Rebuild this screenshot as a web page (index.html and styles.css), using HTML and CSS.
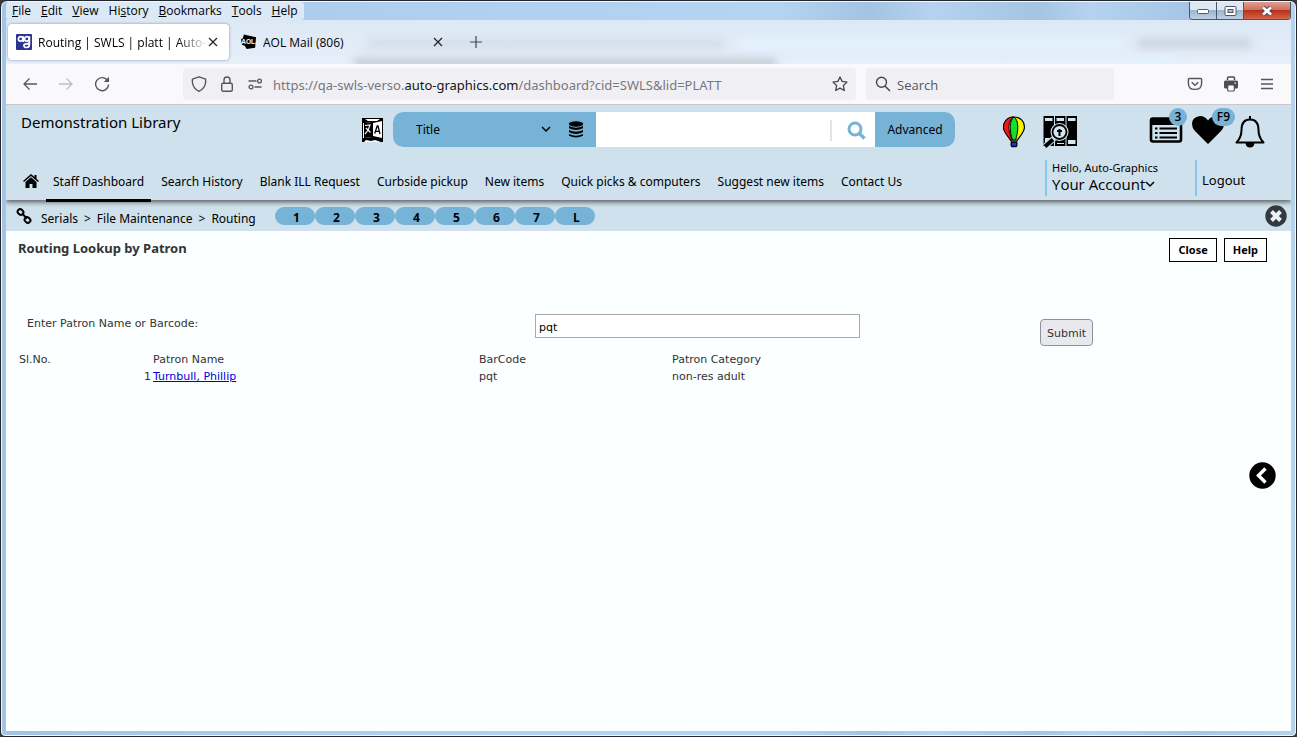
FILE: index.html
```html
<!DOCTYPE html>
<html lang="en">
<head>
<meta charset="utf-8">
<title>Routing | SWLS | platt | Auto-Graphics</title>
<link rel="stylesheet" href="styles.css">
</head>
<body>
<div class="window">
  <header class="chrome">
    <div class="titlebar">
      <nav class="menubar" aria-label="Menu bar">
        <button><u>F</u>ile</button><button><u>E</u>dit</button><button><u>V</u>iew</button><button>Hi<u>s</u>tory</button><button><u>B</u>ookmarks</button><button><u>T</u>ools</button><button><u>H</u>elp</button>
      </nav>
      <div class="window-buttons">
        <button class="win" aria-label="Minimize"><svg width="14" height="8" viewBox="0 0 14 8"><rect x="1.500" y="2.500" width="11" height="4" rx="1" fill="#fff" stroke="#50566a"/></svg></button>
        <button class="win" aria-label="Restore"><svg width="13" height="12" viewBox="0 0 13 12"><rect x="1" y="1.500" width="11" height="9" rx="1" fill="#fff" stroke="#50566a"/><rect x="4" y="4.500" width="5" height="3" fill="#a9c3dd" stroke="#50566a"/></svg></button>
        <button class="win win-close" aria-label="Close window"><svg width="14" height="12" viewBox="0 0 14 12"><path d="M3 2.500 11 9.500M11 2.500 3 9.500" stroke="#50445a" stroke-width="4.600"/><path d="M3 2.500 11 9.500M11 2.500 3 9.500" stroke="#fff" stroke-width="2.800"/></svg></button>
      </div>
    </div>
    <div class="tabstrip">
      <div class="haze haze-a"></div><div class="haze haze-b"></div><div class="haze haze-c"></div><div class="haze haze-d"></div><div class="haze haze-e"></div>
      <div class="tab tab-active">
        <svg width="16" height="16" viewBox="0 0 16 16"><rect width="16" height="16" rx="1" fill="#2b3390"/><g fill="none" stroke="#fff" stroke-width="1.700"><circle cx="4.600" cy="4.900" r="2.200"/><path d="M7.200 2.200v4.300q0 1 1 1"/><circle cx="10.800" cy="4.900" r="2.200"/><path d="M13.400 2.200v8.300q0 3-2.900 3-2.400 0-2.600-1.800 0-1.700 2.500-1.800 3 0 3-2"/></g></svg>
        <span class="tab-title tab-fade">Routing | SWLS | platt | Auto-Gr</span>
        <button class="icon-button" aria-label="Close tab"><svg width="10" height="10" viewBox="0 0 10 10"><path d="M1 1l8 8M9 1 1 9" stroke="#222" stroke-width="1.200"/></svg></button>
      </div>
      <div class="tab">
        <svg width="16" height="16" viewBox="0 0 17 16"><path d="M3 0 16 3 15 14 6 15.500 4 12 1 11 0 5 2 4z" fill="#000"/><text x="8.500" y="10.500" text-anchor="middle" class="aol">AOL.</text></svg>
        <span class="tab-title">AOL Mail (806)</span>
        <button class="icon-button" aria-label="Close tab"><svg width="10" height="10" viewBox="0 0 10 10"><path d="M1 1l8 8M9 1 1 9" stroke="#222" stroke-width="1.200"/></svg></button>
      </div>
      <button class="icon-button new-tab" aria-label="New tab"><svg width="12" height="12" viewBox="0 0 12 12"><path d="M6 0v12M0 6h12" stroke="#444450" stroke-width="1.200"/></svg></button>
    </div>
    <div class="toolbar">
      <div class="history-buttons">
        <button class="icon-button" aria-label="Back"><svg width="16" height="16" viewBox="0 0 16 16"><path d="M15 8H2M7.500 2.500 2 8l5.500 5.500" fill="none" stroke="#55555f" stroke-width="1.300"/></svg></button>
        <button class="icon-button" aria-label="Forward"><svg width="16" height="16" viewBox="0 0 16 16"><path d="M1 8h13M8.500 2.500 14 8l-5.500 5.500" fill="none" stroke="#bfbfc5" stroke-width="1.300"/></svg></button>
        <button class="icon-button" aria-label="Reload"><svg width="16" height="16" viewBox="0 0 16 16"><path d="M13.500 4.500A6.500 6.500 0 1 0 14.600 8.500" fill="none" stroke="#55555f" stroke-width="1.400"/><path d="M15 .8V6H9.800z" fill="#55555f"/></svg></button>
      </div>
      <div class="urlbar">
        <svg width="16" height="16" viewBox="0 0 16 16"><path d="M8 .8 14.600 3.200V6.500Q14 12.500 8 15.300 2 12.500 1.400 6.500V3.200z" fill="none" stroke="#55555f" stroke-width="1.400" stroke-linejoin="round"/></svg>
        <svg width="16" height="16" viewBox="0 0 16 16"><rect x="2.700" y="7.200" width="10.600" height="8" rx="1.500" fill="none" stroke="#55555f" stroke-width="1.400"/><path d="M5 7V4Q5 1 8 1t3 3v3" fill="none" stroke="#55555f" stroke-width="1.400"/></svg>
        <svg width="16" height="12" viewBox="0 0 16 12"><g fill="none" stroke="#55555f" stroke-width="1.300"><circle cx="12.500" cy="3" r="1.900"/><path d="M1.500 3h8M7.500 9h7"/><circle cx="4" cy="9" r="1.900"/></g></svg>
        <a class="url" href="#">https://qa-swls-verso.<b>auto-graphics.com</b>/dashboard?cid=SWLS&amp;lid=PLATT</a>
        <button class="icon-button" aria-label="Bookmark"><svg width="16" height="16" viewBox="0 0 16 16"><path d="M8 1l2.100 4.400 4.900.7-3.600 3.400.9 5L8 12.100 3.700 14.500l.9-5L1 6.100l4.900-.7z" fill="none" stroke="#45454f" stroke-width="1.300" stroke-linejoin="round"/></svg></button>
      </div>
      <label class="quick-search">
        <svg width="16" height="16" viewBox="0 0 16 16"><circle cx="6.500" cy="6.200" r="5" fill="none" stroke="#45454f" stroke-width="1.400"/><path d="m10 10 5 5" stroke="#45454f" stroke-width="1.500"/></svg>
        <input type="text" placeholder="Search" aria-label="Search the web">
      </label>
      <div class="chrome-actions">
        <button class="icon-button" aria-label="Save to Pocket"><svg width="16" height="16" viewBox="0 0 16 16"><path d="M2.300 2.500h11.400q.9 0 .9.900v4q0 6-6.600 6T1.400 7.400v-4q0-.9.900-.9z" fill="none" stroke="#55555f" stroke-width="1.400"/><path d="m4.700 6.300 3.300 3 3.300-3" fill="none" stroke="#55555f" stroke-width="1.400"/></svg></button>
        <button class="icon-button" aria-label="Print"><svg width="16" height="16" viewBox="0 0 16 16"><path d="M4.500 4V2q0-1 1-1h5q1 0 1 1v2" fill="none" stroke="#4c4c57" stroke-width="1.500"/><rect x="1" y="4.500" width="14" height="8" rx="1.500" fill="#4c4c57"/><rect x="4.700" y="9" width="6.600" height="6" rx="1" fill="#fff" stroke="#4c4c57" stroke-width="1.200"/><rect x="11.500" y="6.500" width="1.500" height="1.200" fill="#fff"/></svg></button>
        <button class="icon-button" aria-label="Application menu"><svg width="16" height="12" viewBox="0 0 16 12"><path d="M2 1.500h12M2 6h12M2 10.500h12" stroke="#55555f" stroke-width="1.300"/></svg></button>
      </div>
    </div>
  </header>

  <div class="page">
    <header class="site-header">
      <div class="header-top">
        <div class="library-name">Demonstration Library</div>
        <button class="icon-button" aria-label="Translate"><svg width="21" height="24" viewBox="0 0 21 24"><rect width="21" height="24" fill="#000"/><path d="M3 1h15l-3 2H6zM3 5l7-1v15l-7 1zM2 24l2-2 5 1 4-1 6 2z" fill="#fff"/><path d="M3 5l7-1v15l-7 1z" fill="#000"/><path d="M1 5h1v15H1z" fill="#fff"/><path d="M11 5l9-2v17l-9-2z" fill="#fff"/><path d="m12.700 15.500 2.500-7.500h.8l2 8M13.500 13.300h4" stroke="#000" stroke-width="1.300" fill="none"/><path d="M3 7.500 8 7Q7 12 3 16M4 10l4.500 4.500" stroke="#fff" stroke-width="1.200" fill="none"/></svg></button>
        <form class="search" role="search" onsubmit="return false">
          <div class="search-scope">
            <select aria-label="Search field"><option>Title</option></select>
            <svg class="caret" width="10" height="7" viewBox="0 0 10 7"><path d="m1 1 4 4 4-4" fill="none" stroke="#000" stroke-width="1.500"/></svg>
            <svg width="16" height="17" viewBox="0 0 16 17"><ellipse cx="8" cy="3" rx="7.200" ry="2.700"/><path d="M1 5q7 3.500 14 0v2.300q-7 3.500-14 0zM1 9q7 3.500 14 0v2.300q-7 3.500-14 0zM1 13q7 3.500 14 0v1.700q-7 3.500-14 0z"/></svg>
          </div>
          <input type="text" aria-label="Search catalog">
          <button class="search-go" aria-label="Search"><svg width="19" height="19" viewBox="0 0 19 19"><circle cx="8" cy="8" r="6" fill="none" stroke="#76b3d6" stroke-width="3"/><path d="m12 12 5.500 5.500" stroke="#76b3d6" stroke-width="3.400"/></svg></button>
          <button class="advanced">Advanced</button>
        </form>
        <div class="tools">
          <button class="icon-button" aria-label="Balloon"><svg width="24" height="32" viewBox="0 0 24 32"><path d="M12 1C5 1 1.500 6 1.500 11 1.500 16 6 20 8.500 24h7C18 20 22.500 16 22.500 11 22.500 6 19 1 12 1z" fill="#f5f500" stroke="#000" stroke-width="1.200"/><path d="M12 1C5 1 1.500 6 1.500 11 1.500 16 6 20 8.500 24h2C3 10 9 2 12 1z" fill="#f01818" stroke="#000"/><path d="M12 1C7 4 7.500 16 10.500 24h3C16.500 16 17 4 12 1z" fill="#10e030" stroke="#000"/><path d="m8.500 24 1 2m6-2-1 2" stroke="#000"/><rect x="9.200" y="26" width="5.600" height="4.500" rx="1" fill="#1a38d8" stroke="#000" stroke-width="1.300"/></svg></button>
          <button class="icon-button" aria-label="Find books"><svg width="34" height="32" viewBox="0 0 34 32"><path d="M.5 0h10.500v30H.5zM12 0h10.500v30H12zM23.500 0H34v30H23.500z"/><path d="M2 2h7.500v3H2zM13.500 2H21v3h-7.500zM25 2h7.500v3H25zM25 24h7.500v4H25zM2 22h6l-6 5zM14 27h7v1h-7z" fill="#d4e6ef"/><path d="m2 30.500 9-8" stroke="#cfe2ec" stroke-width="6"/><path d="m2 30.500 8-7" stroke="#000" stroke-width="4"/><circle cx="16.500" cy="16" r="8" fill="#d4e6ef" stroke="#d4e6ef" stroke-width="2"/><circle cx="16.500" cy="16" r="7" fill="#d4e6ef" stroke="#000" stroke-width="1.800"/><path d="M16.500 20v-7M14 15h5" stroke="#000" stroke-width="2"/></svg></button>
          <button class="icon-button badge-host lists" aria-label="Lists"><svg width="34" height="28" viewBox="0 0 34 28"><rect x="2" y="2.500" width="30" height="23" rx="2" fill="none" stroke="#000" stroke-width="2.600"/><path d="M2 2h30v7H2z"/><path d="M6 12.500h2.500M6 17h2.500M6 21.500h2.500M10.500 12.500H28M10.500 17H28M10.500 21.500H28" stroke="#000" stroke-width="2"/></svg><span class="badge">3</span></button>
          <button class="icon-button badge-host" aria-label="Favorites"><svg width="32" height="28" viewBox="0 0 32 28"><path d="M16 28 3 15Q0 12 0 8 0 1 8 0q5 0 8 4.500Q19 0 24 0q8 1 8 8 0 4-3 7z"/></svg><span class="badge">F9</span></button>
          <button class="icon-button bell" aria-label="Notifications"><svg width="30" height="32" viewBox="0 0 30 32"><path d="M15 3.500C9 3.500 6.500 8 6.500 14c0 6-1.500 9-5 12.500h27C25 23 23.500 20 23.500 14c0-6-2.500-10.500-8.500-10.500z" fill="none" stroke="#000" stroke-width="2" stroke-linejoin="round"/><path d="M15 0v4" stroke="#000" stroke-width="2"/><path d="M10.500 27h9Q19 31.500 15 31.500T10.500 27z"/></svg></button>
        </div>
      </div>
      <div class="header-bottom">
        <nav class="site-nav" aria-label="Main">
          <a href="#" class="home" aria-label="Home"><svg width="16" height="14" viewBox="0 0 16 14"><path d="M8 0 0 7l1 1 7-6 7 6 1-1-2.500-2.200V1h-2v2zM8 3.200 2.500 8v6h4v-4h3v4h4V8z"/></svg></a>
          <a href="#" class="current">Staff Dashboard</a><a href="#">Search History</a><a href="#">Blank ILL Request</a><a href="#">Curbside pickup</a><a href="#">New items</a><a href="#">Quick picks &amp; computers</a><a href="#">Suggest new items</a><a href="#">Contact Us</a>
        </nav>
        <button class="account"><span>Hello, Auto-Graphics</span><strong>Your Account<svg width="10" height="7" viewBox="0 0 10 7"><path d="m1 1 4 4 4-4" fill="none" stroke="#000" stroke-width="1.500"/></svg></strong></button>
        <a class="logout" href="#">Logout</a>
      </div>
    </header>

    <div class="crumb-bar">
      <svg width="16" height="16" viewBox="0 0 16 16"><g fill="none" stroke="#000" stroke-width="2"><rect x="1.500" y="1.500" width="6" height="5" rx="2.500" transform="rotate(40 4.500 4)"/><rect x="8.500" y="9.500" width="6" height="5" rx="2.500" transform="rotate(40 11.500 12)"/><path d="m6 5.500 5 5"/></g></svg>
      <nav class="crumbs" aria-label="Breadcrumb"><a href="#">Serials</a><span>&gt;</span><a href="#">File Maintenance</a><span>&gt;</span><a href="#">Routing</a></nav>
      <div class="pills"><button>1</button><button>2</button><button>3</button><button>4</button><button>5</button><button>6</button><button>7</button><button>L</button></div>
      <button class="icon-button dismiss" aria-label="Close panel"><svg width="22" height="22" viewBox="0 0 22 22"><circle cx="11" cy="11" r="10.700" fill="#34393d"/><path d="m6.500 6.500 9 9m0-9-9 9" stroke="#e8f1f5" stroke-width="4"/></svg></button>
    </div>

    <main class="content">
      <div class="heading-row">
        <h1>Routing Lookup by Patron</h1>
        <div class="actions"><button>Close</button><button>Help</button></div>
      </div>
      <form class="lookup" onsubmit="return false">
        <label for="patron">Enter Patron Name or Barcode:</label>
        <div><input id="patron" type="text" value="pqt"></div>
        <div><button>Submit</button></div>
      </form>
      <table class="results">
        <colgroup><col class="col-no"><col class="col-name"><col class="col-code"><col></colgroup>
        <thead><tr><th>Sl.No.</th><th>Patron Name</th><th>BarCode</th><th>Patron Category</th></tr></thead>
        <tbody><tr><td>1</td><td><a href="#">Turnbull, Phillip</a></td><td>pqt</td><td>non-res adult</td></tr></tbody>
      </table>
      <button class="icon-button drawer" aria-label="Open side panel"><svg width="27" height="27" viewBox="0 0 27 27"><circle cx="13.500" cy="13.500" r="13.200"/><path d="m16.500 6.500-7 7 7 7" fill="none" stroke="#fff" stroke-width="3.400"/></svg></button>
    </main>
  </div>
</div>
</body>
</html>
```
FILE: styles.css
```css
* { box-sizing: border-box; }
body { margin: 0; background: #3a3a3a; color: #000; font-family: "Open Sans", "Noto Sans", sans-serif; font-size: 12px; }
button, input, select { margin: 0; padding: 0; border: 0; background: none; color: inherit; font: inherit; }
a { color: inherit; text-decoration: none; }
svg { display: block; flex: none; }

.window { display: flex; flex-direction: column; min-height: 100vh; padding: 1px 5px 5px; border: 1px solid #22262e; border-radius: 7px 7px 5px 5px; background: linear-gradient(90deg, #a5c3e3, #aecfef 30%, #b5d4f2 60%, #a4c3e2 67%, #b5d3f0 72%, #a5c4e2 80%, #b5d3f0 84%, #a5c5e5 92%, #b5d3ee); box-shadow: inset 0 0 0 1px #eef8ff; }
.icon-button { display: flex; align-items: center; justify-content: center; flex: none; }

.titlebar { display: flex; justify-content: space-between; height: 18px; }
.menubar { display: flex; gap: 10px; padding: 0 6px; border-radius: 3px; background: #dbe8f5; line-height: 18px; }
.window-buttons { display: flex; height: 18px; border: 1px solid #50566a; border-top: 0; border-radius: 0 0 4px 4px; overflow: hidden; }
.win { display: flex; align-items: center; justify-content: center; width: 27px; border-right: 1px solid #50566a; background: linear-gradient(#dce8f4 45%, #9fb5cc 50%, #bdd0e4); }
.win-close { width: 46px; border-right: 0; background: linear-gradient(#e0a090, #d07060 45%, #b83018 50%, #d06848); }

.tabstrip { position: relative; display: flex; align-items: center; height: 44px; padding: 0 2px; overflow: hidden; background: linear-gradient(#dce8f5, #e6effa); }
.haze { position: absolute; border-radius: 6px; filter: blur(4px); background: #e2f1ff; }
.haze-a { left: 28%; right: 44%; top: 19px; height: 9px; background: #d2dde8; }
.haze-b { left: 27%; right: 40%; top: 38px; height: 10px; background: #c4ccd5; }
.haze-c { left: 57%; right: 13%; top: 18px; height: 11px; }
.haze-d { left: 88%; right: 3%; top: 19px; height: 9px; background: #c8d2dc; }
.haze-e { left: 78%; right: 9%; top: 38px; height: 8px; }
.tab { position: relative; display: flex; align-items: center; width: 221px; height: 36px; padding: 0 11px 0 8px; margin-right: 4px; }
.tab-active { border-radius: 4px; background: #fff; box-shadow: 0 0 3px #8592a5; }
.tab-title { flex: 1; min-width: 0; margin-left: 6px; overflow: hidden; white-space: nowrap; }
.tab-fade { -webkit-mask-image: linear-gradient(90deg, #000 82%, transparent); mask-image: linear-gradient(90deg, #000 82%, transparent); }
.aol { font: bold 7px "Liberation Sans", sans-serif; fill: #fff; }
.new-tab { position: relative; width: 36px; height: 36px; }

.toolbar { display: flex; align-items: center; height: 41px; padding: 0 16px; border-bottom: 1px solid #c9c9cd; background: #f9f9fb; }
.history-buttons { display: flex; gap: 20px; width: 161px; }
.urlbar { display: flex; align-items: center; flex: 1; gap: 12px; height: 32px; padding: 0 8px; border-radius: 4px; background: #f0f0f4; }
.url { flex: 1; margin-left: -2px; padding-top: 2px; overflow: hidden; white-space: nowrap; color: #77777f; font-family: "Noto Sans", sans-serif; font-size: 13px; line-height: 20px; }
.url b { color: #15141a; font-weight: 400; }
.quick-search { display: flex; align-items: center; gap: 6px; width: 248px; height: 32px; margin-left: 10px; padding: 0 9px; border-radius: 4px; background: #f0f0f4; }
.quick-search input { width: 100%; padding-top: 2px; font-size: 13px; outline: 0; }
.quick-search input::placeholder { color: #55555f; opacity: 1; }
.chrome-actions { display: flex; gap: 20px; margin-left: 73px; }

.page { display: flex; flex: 1; flex-direction: column; background: #fbffff; }
.site-header { position: relative; background: #cee1ec; box-shadow: 0 2px 5px #555; clip-path: inset(0 0 -12px 0); font-family: "Noto Sans", sans-serif; font-size: 13px; }
.header-top { display: flex; height: 50px; padding: 7px 26px 0 15px; }
.header-top > .icon-button { height: 35px; }
.library-name { width: 341px; font-size: 15px; line-height: 20px; }
.search { display: flex; flex: 1; height: 35px; margin-left: 10px; overflow: hidden; border-radius: 10px; background: #fff; }
.search-scope { position: relative; display: flex; align-items: center; width: 203px; padding-right: 12px; background: #76b3d6; }
.search-scope select { flex: 1; height: 35px; padding-left: 23px; appearance: none; font-size: 12px; }
.caret { margin-right: 17px; }
.search > input { flex: 1; min-width: 0; padding: 0 10px; }
.search-go { display: flex; align-items: center; justify-content: center; width: 45px; height: 21px; margin-top: 8px; padding-left: 5px; border-left: 2px solid #e3e3e3; }
.advanced { width: 80px; background: #76b3d6; font-size: 12px; }
.tools { display: flex; align-items: flex-start; padding-top: 4px; margin-left: 47px; }
.tools .icon-button + .icon-button { margin-left: 17px; }
.tools .lists.lists { margin-left: 72px; }
.tools .badge-host + .badge-host { margin-left: 9px; }
.tools .bell.bell { margin-left: 11px; }
.badge-host { position: relative; }
.badge { position: absolute; top: -8px; right: -4px; min-width: 18px; padding: 0 5px; border-radius: 9px; background: #76b3d6; font-family: "Open Sans", sans-serif; font-size: 12px; font-weight: 600; line-height: 18px; }
.badge-host + .badge-host .badge { right: -11px; }
.header-bottom { display: flex; height: 45px; padding-left: 10px; }
.site-nav { display: flex; flex: 1; gap: 3px; align-self: flex-end; }
.site-nav a { display: flex; align-items: center; height: 39px; margin-bottom: -2px; padding: 0 7px; border-bottom: 3px solid transparent; font-size: 12px; white-space: nowrap; }
.site-nav .home { padding-right: 4px; }
.site-nav .current { border-color: #000; }
.account { display: flex; flex-direction: column; width: 150px; height: 36px; margin-top: 5px; padding-left: 5px; border-left: 2px solid #86c5ee; text-align: left; }
.account span { font-size: 11px; line-height: 16px; }
.account strong { display: flex; align-items: center; font-family: "Open Sans", sans-serif; font-size: 15px; font-weight: 400; line-height: 17px; }
.logout { width: 96px; height: 36px; margin-top: 5px; padding-left: 5px; border-left: 2px solid #86c5ee; line-height: 40px; }

.crumb-bar { display: flex; align-items: center; height: 31px; padding: 0 4px 0 10px; background: #cee1ec; }
.crumbs { display: flex; gap: 6px; width: 225px; margin: 5px 0 0 9px; font-family: "Noto Sans", sans-serif; white-space: nowrap; }
.pills { display: flex; margin: 0 auto 0 9px; }
.pills button { width: 40px; height: 18px; padding: 4px 0 0 3px; border-radius: 9px; background: #76b3d6; font-weight: 700; line-height: 14px; }

.content { position: relative; flex: 1; padding: 7px 24px 20px 12px; color: #333; font-family: "DejaVu Sans", Verdana, sans-serif; font-size: 11px; }
.heading-row { display: flex; justify-content: space-between; }
h1 { margin: 1px 0 0; font: bold 13px/18px "Noto Sans", sans-serif; }
.actions { display: flex; gap: 7px; }
.actions button { height: 24px; padding: 0 8px 2px; border: 1px solid #000; background: #fff; color: #000; font: bold 11px "Noto Sans", sans-serif; }
.lookup { display: grid; grid-template-columns: 508fr 505fr 227fr; margin-top: 52px; padding-left: 9px; }
.lookup label { padding-top: 3px; }
.lookup input { width: 325px; height: 24px; padding: 2px 3px 0; border: 1px solid #aaa; background: #fff; color: #000; }
.lookup button { height: 27px; margin-top: 5px; padding: 1px 6px 0; border: 1px solid #8f8f9d; border-radius: 4px; background: #e9e9ed; }
.results { width: 100%; margin-top: 5px; border-collapse: collapse; table-layout: fixed; line-height: 17px; }
.results th, .results td { padding: 0 1px; font-weight: 400; text-align: left; }
.results td:first-child { text-align: right; }
.results a { color: #0000e0; text-decoration: underline; }
.col-no { width: 134px; }
.col-name { width: 326px; }
.col-code { width: 193px; }
.drawer { position: absolute; top: 231px; right: 15px; }
```
